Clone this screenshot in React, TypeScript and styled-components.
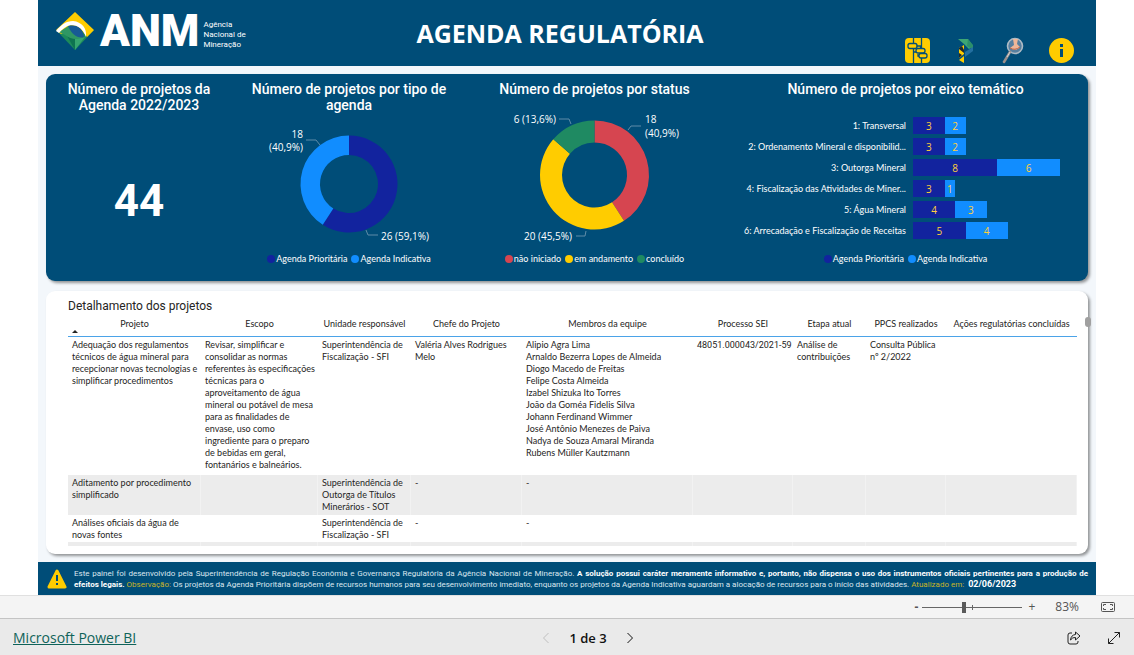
import React from "react";
import styled, { createGlobalStyle } from "styled-components";

const color = {
  navy: "#004d78",
  page: "#f3f7fb",
  yellow: "#ffcc00",
  priority: "#12239e",
  indicative: "#118dff",
  red: "#d64550",
  green: "#1f8a62",
};

const textFont = `"Open Sans", "Segoe UI", sans-serif`;
const titleFont = `Roboto, "Liberation Sans", sans-serif`;
const denseFont = `Lato, "Segoe UI", sans-serif`;

const GlobalStyle = createGlobalStyle`
  * { box-sizing: border-box; }
  body { margin: 0; background: #fff; font-family: ${textFont}; color: #252423; }
  button { border: 0; padding: 0; background: none; color: inherit; font: inherit; display: flex; cursor: pointer; }
  h1, h2, p, ul { margin: 0; padding: 0; }
`;

const Shell = styled.div`
  display: flex;
  flex-direction: column;
  min-height: 100vh;
`;

const Report = styled.main`
  flex: 1;
  display: flex;
  flex-direction: column;
  margin: 0 38px;
  background: ${color.page};
`;

const Header = styled.header`
  display: grid;
  grid-template-columns: 1fr auto 1fr;
  align-items: center;
  height: 66px;
  padding: 0 22px 0 8px;
  background: ${color.navy};
  color: #fff;
`;

const Brand = styled.div`
  display: flex;
  align-items: center;
  padding-left: 10px;
  padding-bottom: 4px;
`;

const BrandName = styled.span`
  margin-left: 5px;
  font: 900 44px/48px ${titleFont};
`;

const BrandCaption = styled.span`
  margin: 8px 0 0 4px;
  font: 400 8px/10px ${titleFont};
`;

const Title = styled.h1`
  font-size: 25px;
  line-height: 34px;
  font-weight: 700;
`;

const HeaderActions = styled.nav`
  align-self: end;
  justify-self: end;
  display: flex;
  align-items: center;
  gap: 23px;
  padding-bottom: 2px;
`;

const Summary = styled.section`
  display: grid;
  grid-template-columns: 186fr 234fr 257fr 365fr;
  height: 207px;
  margin: 8px 8px 0;
  border-radius: 9px;
  background: ${color.navy};
  box-shadow: 2px 2px 3px rgba(0, 0, 0, 0.4);
  color: #fff;
`;

const Tile = styled.article`
  display: flex;
  flex-direction: column;
  align-items: center;
  padding-top: 7px;
`;

const TileTitle = styled.h2<{ $inset?: number }>`
  padding: 0 ${(p) => p.$inset ?? 0}px;
  font: 500 14px/16px ${titleFont};
  text-align: center;
`;

const BigNumber = styled.p`
  margin-top: 60px;
  font: 700 44px/56px ${titleFont};
`;

const Chart = styled.svg`
  display: block;
  overflow: visible;
  flex: none;
  margin-top: 1px;
  font-size: 10px;
  fill: #fff;
`;

const Legend = styled.ul`
  display: flex;
  justify-content: center;
  gap: 4px;
  margin-top: auto;
  margin-bottom: 15px;
  list-style: none;
  font: 400 9px/14px ${denseFont};
  white-space: nowrap;
`;

const LegendItem = styled.li<{ $color: string }>`
  display: flex;
  align-items: center;
  gap: 1px;
  &::before {
    content: "";
    width: 8px;
    height: 8px;
    border-radius: 50%;
    background: ${(p) => p.$color};
  }
`;

const BarChart = styled.div`
  align-self: stretch;
  display: flex;
  flex-direction: column;
  gap: 4px;
  margin-top: 20px;
  padding-right: 28px;
`;

const BarRow = styled.div`
  display: grid;
  grid-template-columns: 183fr 147fr;
  column-gap: 7px;
  align-items: center;
  height: 17px;
`;

const BarLabel = styled.span`
  font: 400 9px/16px ${denseFont};
  text-align: right;
  white-space: nowrap;
`;

const Bars = styled.div`
  display: flex;
`;

const Bar = styled.span<{ $color: string }>`
  height: 17px;
  background: ${(p) => p.$color};
  color: #ffd03b;
  font-size: 10px;
  line-height: 18px;
  text-align: center;
`;

const Details = styled.section`
  position: relative;
  height: 263px;
  margin: 10px 8px 8px;
  padding: 8px 11px 0 22px;
  border-radius: 9px;
  background: #fff;
  box-shadow: 2px 2px 3px rgba(0, 0, 0, 0.4);
`;

const DetailsTitle = styled.h2`
  font: 400 12px/14px ${titleFont};
`;

const TableViewport = styled.div`
  height: 231px;
  margin-top: 2px;
  overflow: hidden;
`;

const ScrollThumb = styled.span`
  position: absolute;
  top: 26px;
  right: -3px;
  width: 6px;
  height: 10px;
  border-radius: 3px;
  background: #a0a0a0;
`;

const Table = styled.table`
  width: 100%;
  table-layout: fixed;
  border-collapse: separate;
  border-spacing: 0;
  font: 400 9px/12px ${denseFont};
`;

const HeadCell = styled.th`
  height: 22px;
  padding: 3px 0 0;
  border-bottom: 1px solid #4ba3e8;
  font-weight: 400;
  vertical-align: top;
  white-space: nowrap;
`;

const SortMark = styled.svg`
  display: block;
  margin: 0 0 0 4px;
`;

const Row = styled.tr<{ $height: number }>`
  height: ${(p) => p.$height}px;
  &:nth-child(even) { background: #ececec; }
`;

const Cell = styled.td<{ $numeric: boolean }>`
  padding: 2px 0 0 4px;
  border-right: 1px solid rgba(255, 255, 255, 0.3);
  font-family: ${(p) => (p.$numeric ? titleFont : denseFont)};
  vertical-align: top;
  white-space: pre;
`;

const Notice = styled.footer`
  display: flex;
  align-items: center;
  gap: 7px;
  height: 33px;
  padding: 0 8px 0 9px;
  background: ${color.navy};
  color: #dbe7ef;
`;

const NoticeText = styled.div`
  flex: 1;
  font: 400 8px/11px ${titleFont};
  b { color: #fff; }
  em { font-style: normal; color: #c8b428; }
  time { margin-left: 2px; font: 700 9px/11px ${titleFont}; color: #fff; }
`;

const NoticeLine = styled.p<{ $justify?: boolean }>`
  text-align-last: ${(p) => (p.$justify ? "justify" : "left")};
`;

const ZoomBar = styled.div`
  display: flex;
  align-items: center;
  justify-content: flex-end;
  height: 23px;
  padding-right: 19px;
  border-top: 1px solid #e0e0e0;
  background: #f4f4f4;
  color: #555;
  font-size: 12px;
  line-height: 16px;
`;

const ZoomSlider = styled.input`
  appearance: none;
  width: 100px;
  height: 12px;
  margin: 0 6px 0 4px;
  background:
    linear-gradient(#666, #666) center / 1px 5px no-repeat,
    linear-gradient(#666, #666) center / 100% 1px no-repeat;
  &::-webkit-slider-thumb {
    appearance: none;
    width: 4px;
    height: 11px;
    background: #5a5a5a;
  }
`;

const ZoomValue = styled.output`
  margin: 0 22px 0 20px;
`;

const Pager = styled.div`
  display: grid;
  grid-template-columns: 1fr auto 1fr;
  align-items: center;
  height: 37px;
  padding: 2px 13px 0;
  border-top: 1px solid #c4c4c4;
  background: #eaeaea;
`;

const BrandLink = styled.a`
  justify-self: start;
  font-size: 14px;
  line-height: 20px;
  color: #0f6359;
`;

const PageNav = styled.nav`
  display: flex;
  align-items: center;
  gap: 19px;
  padding-left: 42px;
  font-size: 13px;
  font-weight: 600;
  line-height: 20px;
  color: #111;
  button:disabled { color: #c0c0c0; }
`;

const PagerActions = styled.div`
  justify-self: end;
  display: flex;
  align-items: center;
  gap: 26px;
`;

type Slice = { value: number; color: string };

function Donut({ cx, cy, outer, inner, slices }: { cx: number; cy: number; outer: number; inner: number; slices: Slice[] }) {
  const total = slices.reduce((sum, s) => sum + s.value, 0);
  const point = (r: number, t: number) => {
    const a = t * 2 * Math.PI;
    return `${cx + r * Math.sin(a)} ${cy - r * Math.cos(a)}`;
  };
  let start = 0;
  return (
    <>
      {slices.map((s) => {
        const end = start + s.value / total;
        const large = end - start > 0.5 ? 1 : 0;
        const d = `M${point(outer, start)}A${outer} ${outer} 0 ${large} 1 ${point(outer, end)}L${point(inner, end)}A${inner} ${inner} 0 ${large} 0 ${point(inner, start)}Z`;
        start = end;
        return <path key={s.color} d={d} fill={s.color} />;
      })}
    </>
  );
}

const agendaLegend = [
  { label: "Agenda Prioritária", color: color.priority },
  { label: "Agenda Indicativa", color: color.indicative },
];

const statusLegend = [
  { label: "não iniciado", color: color.red },
  { label: "em andamento", color: color.yellow },
  { label: "concluído", color: color.green },
];

function ChartLegend({ items }: { items: { label: string; color: string }[] }) {
  return (
    <Legend>
      {items.map((i) => (
        <LegendItem key={i.label} $color={i.color}>{i.label}</LegendItem>
      ))}
    </Legend>
  );
}

const axes: [string, number, number][] = [
  ["1: Transversal", 3, 2],
  ["2: Ordenamento Mineral e disponibilid...", 3, 2],
  ["3: Outorga Mineral ", 8, 6],
  ["4: Fiscalização das Atividades de Miner...", 3, 1],
  ["5: Água Mineral", 4, 3],
  ["6: Arrecadação e Fiscalização de Receitas", 5, 4],
];
const axisMax = 14;

const processColumn = 5;

const columns: [string, number][] = [
  ["Projeto", 133],
  ["Escopo", 117],
  ["Unidade responsável", 93],
  ["Chefe do Projeto", 111],
  ["Membros da equipe", 171],
  ["Processo SEI", 100],
  ["Etapa atual", 73],
  ["PPCS realizados", 80],
  ["Ações regulatórias concluídas", 131],
];

const rows: { height: number; cells: string[] }[] = [
  {
    height: 138,
    cells: [
      "Adequação dos regulamentos\ntécnicos de água mineral para\nrecepcionar novas tecnologias e\nsimplificar procedimentos",
      "Revisar, simplificar e\nconsolidar as normas\nreferentes às especificações\ntécnicas para o\naproveitamento de água\nmineral ou potável de mesa\npara as finalidades de\nenvase, uso como\ningrediente para o preparo\nde bebidas em geral,\nfontanários e balneários.",
      "Superintendência de\nFiscalização - SFI",
      "Valéria Alves Rodrigues\nMelo",
      "Alipio Agra Lima\nArnaldo Bezerra Lopes de Almeida\nDiogo Macedo de Freitas\nFelipe Costa Almeida\nIzabel Shizuka Ito Torres\nJoão da Goméa Fidelis Silva\nJohann Ferdinand Wimmer\nJosé Antônio Menezes de Paiva\nNadya de Souza Amaral Miranda\nRubens Müller Kautzmann",
      "48051.000043/2021-59",
      "Análise de\ncontribuições",
      "Consulta Pública\nnº 2/2022",
      "",
    ],
  },
  {
    height: 40,
    cells: ["Aditamento por procedimento\nsimplificado", "", "Superintendência de\nOutorga de Títulos\nMinerários - SOT", "-", "-", "", "", "", ""],
  },
  {
    height: 27,
    cells: ["Análises oficiais da água de\nnovas fontes", "", "Superintendência de\nFiscalização - SFI", "-", "-", "", "", "", ""],
  },
  { height: 27, cells: ["", "", "", "", "", "", "", "", ""] },
];

function BrandMark() {
  return (
    <svg width="39" height="39" viewBox="0 0 39 39" aria-hidden="true">
      <path d="M0 18 19 38 38 18Z" fill="#1d8a5a" />
      <path d="M10 22 19 38 19 27Z" fill="#0e7350" />
      <path d="M19 38 29 25 19 27Z" fill="#36a56f" />
      <path d="M19 0 38 18 31 25 24 16 5 22 0 18Z" fill={color.yellow} />
      <path d="M3 20 14 13 28 25Q18 30 9 23Z" fill="#2f9764" />
      <path d="M12 14C20 11 27 16 28 25C22 27 16 23 12 14Z" fill="#175a94" />
      <path d="M0 19C5 13 10 9 17 9C26 10 31 16 30 25C27 17 22 13 15 13C10 14 6 17 3 21Z" fill="#fff" />
    </svg>
  );
}

function ProcessIcon() {
  return (
    <svg width="25" height="25" viewBox="0 0 25 25" aria-hidden="true">
      <rect width="25" height="25" rx="4" fill={color.yellow} />
      <g fill="none" stroke={color.navy} strokeWidth="1.3">
        <path d="M8.500 0V5M8.500 11V25M16.500 0V10M16.500 20V25M11.500 8H15.500V10M8.500 14H11M13 16V18H14" />
        <rect x="3" y="5.500" width="9" height="5" rx="2" />
        <rect x="11" y="10.500" width="9" height="4.500" rx="2" />
        <rect x="14" y="15.500" width="8" height="4.500" rx="2" />
      </g>
    </svg>
  );
}

function ParticipationIcon() {
  return (
    <svg width="25" height="25" viewBox="0 0 25 25" aria-hidden="true">
      <path d="M5 1H15L20 8 16 11 11 6Z" fill="#3da675" />
      <path d="M15 1 20 7V12L14 8Z" fill="#2c8f6b" />
      <path d="M20 9V13L12 19V14Z" fill="#236fa0" />
      <path d="M6 10 11 7V16L6 20Z" fill={color.yellow} />
      <path d="M6 10 9 8 11 12V15L6 11Z" fill="#1d2830" />
      <path d="M6 15 9 17 6 20Z" fill="#1d2830" />
      <path d="M6 22 11 18V25Z" fill={color.yellow} />
    </svg>
  );
}

function SearchIcon() {
  return (
    <svg width="25" height="27" viewBox="0 0 25 27" aria-hidden="true">
      <circle cx="14" cy="9" r="7.500" fill="#567f9f" stroke="#aebbc5" strokeWidth="1.600" />
      <path d="M12 2H17L16 7 19 10C17 13 13 14 9 11L13 8Z" fill="#efb698" />
      <path d="M9 11Q14 14 19 10" fill="none" stroke="#b96349" />
      <path d="M9 15 3 25" stroke="#9a8f8c" strokeWidth="2.500" strokeLinecap="round" />
      <path d="M9 15 6 20" stroke="#d8d8d8" strokeWidth="1" />
    </svg>
  );
}

function InfoIcon() {
  return (
    <svg width="25" height="25" viewBox="0 0 25 25" aria-hidden="true">
      <circle cx="12.500" cy="12.500" r="12.500" fill={color.yellow} />
      <path d="M11 6H14V9H11ZM11 11H14V19H11Z" fill={color.navy} />
    </svg>
  );
}

export default function App() {
  return (
    <Shell>
      <GlobalStyle />
      <Report>
        <Header>
          <Brand>
            <BrandMark />
            <BrandName>ANM</BrandName>
            <BrandCaption>Agência<br />Nacional de<br />Mineração</BrandCaption>
          </Brand>
          <Title>AGENDA REGULATÓRIA</Title>
          <HeaderActions>
            <button aria-label="Processo"><ProcessIcon /></button>
            <button aria-label="Participação"><ParticipationIcon /></button>
            <button aria-label="Consulta"><SearchIcon /></button>
            <button aria-label="Informações"><InfoIcon /></button>
          </HeaderActions>
        </Header>

        <Summary>
          <Tile>
            <TileTitle $inset={16}>Número de projetos da Agenda 2022/2023</TileTitle>
            <BigNumber>44</BigNumber>
          </Tile>
          <Tile>
            <TileTitle $inset={16}>Número de projetos por tipo de agenda</TileTitle>
            <Chart width="234" height="130" viewBox="0 0 234 130">
              <Donut cx={117} cy={70} outer={48.5} inner={29} slices={[{ value: 26, color: color.priority }, { value: 18, color: color.indicative }]} />
              <path d="M74 26H84L88 31M134 116 136 121H146" fill="none" stroke="#5f8ca8" />
              <text x="71" y="24" textAnchor="end">18</text>
              <text x="71" y="37" textAnchor="end">(40,9%)</text>
              <text x="149" y="126">26 (59,1%)</text>
            </Chart>
            <ChartLegend items={agendaLegend} />
          </Tile>
          <Tile>
            <TileTitle>Número de projetos por status</TileTitle>
            <Chart width="257" height="146" viewBox="0 0 257 146">
              <Donut
                cx={128.5}
                cy={77}
                outer={54.5}
                inner={32.5}
                slices={[{ value: 18, color: color.red }, { value: 20, color: color.yellow }, { value: 6, color: color.green }]}
              />
              <path d="M93 21H103L105 26M162 32 165 28H175M110 138H119L120 133" fill="none" stroke="#5f8ca8" />
              <text x="90" y="25" textAnchor="end">6 (13,6%)</text>
              <text x="179" y="25">18</text>
              <text x="179" y="39">(40,9%)</text>
              <text x="106" y="142" textAnchor="end">20 (45,5%)</text>
            </Chart>
            <ChartLegend items={statusLegend} />
          </Tile>
          <Tile>
            <TileTitle>Número de projetos por eixo temático</TileTitle>
            <BarChart>
              {axes.map(([label, priority, indicative]) => (
                <BarRow key={label}>
                  <BarLabel>{label}</BarLabel>
                  <Bars>
                    <Bar $color={color.priority} style={{ width: `${(priority / axisMax) * 100}%` }}>{priority}</Bar>
                    <Bar $color={color.indicative} style={{ width: `${(indicative / axisMax) * 100}%` }}>{indicative}</Bar>
                  </Bars>
                </BarRow>
              ))}
            </BarChart>
            <ChartLegend items={agendaLegend} />
          </Tile>
        </Summary>

        <Details>
          <DetailsTitle>Detalhamento dos projetos</DetailsTitle>
          <ScrollThumb />
          <TableViewport>
            <Table>
              <colgroup>
                {columns.map(([name, width]) => <col key={name} width={width} />)}
              </colgroup>
              <thead>
                <tr>
                  {columns.map(([name], i) => (
                    <HeadCell key={name} scope="col">
                      {name}
                      {i === 0 && (
                        <SortMark width="6" height="3" viewBox="0 0 6 3" aria-hidden="true"><path d="M0 3 3 0 6 3Z" fill="#252423" /></SortMark>
                      )}
                    </HeadCell>
                  ))}
                </tr>
              </thead>
              <tbody>
                {rows.map((row, r) => (
                  <Row key={r} $height={row.height}>
                    {row.cells.map((cell, c) => <Cell key={c} $numeric={c === processColumn}>{cell}</Cell>)}
                  </Row>
                ))}
              </tbody>
            </Table>
          </TableViewport>
        </Details>

        <Notice>
          <svg width="20" height="20" viewBox="0 0 20 20" aria-hidden="true">
            <path d="M10 2 18 18H2Z" fill={color.yellow} stroke={color.yellow} strokeWidth="3" strokeLinejoin="round" />
            <path d="M9 6H11V12H9ZM9 14H11V16H9Z" fill={color.navy} />
          </svg>
          <NoticeText>
            <NoticeLine $justify>
              Este painel foi desenvolvido pela Superintendência de Regulação Econômia e Governança Regulatória da Agência Nacional de Mineração.{" "}
              <b>A solução possui caráter meramente informativo e, portanto, não dispensa o uso dos instrumentos oficiais pertinentes para a produção de</b>
            </NoticeLine>
            <NoticeLine>
              <b>efeitos legais.</b> <em>Observação:</em> Os projetos da Agenda Prioritária dispõem de recursos humanos para seu desenvolvimento imediato, enquanto os projetos da Agenda Indicativa aguardam a alocação de recursos para o início das atividades. <em>Atualizado em:</em>{" "}
              <time dateTime="2023-06-02">02/06/2023</time>
            </NoticeLine>
          </NoticeText>
        </Notice>
      </Report>

      <ZoomBar>
        <button aria-label="Reduzir"><b>-</b></button>
        <ZoomSlider type="range" min="0" max="200" defaultValue="83" aria-label="Zoom" />
        <button aria-label="Ampliar">+</button>
        <ZoomValue>83%</ZoomValue>
        <button aria-label="Ajustar à página">
          <svg width="14" height="10" viewBox="0 0 14 10" fill="none" stroke="#555" aria-hidden="true">
            <rect x="0.500" y="0.500" width="13" height="9" rx="1" />
            <path d="M5 2.500H2.500V4M2.500 6V7.500H5M9 2.500H11.500V4M11.500 6V7.500H9" />
          </svg>
        </button>
      </ZoomBar>

      <Pager>
        <BrandLink href="#powerbi">Microsoft Power BI</BrandLink>
        <PageNav aria-label="Páginas">
          <button disabled aria-label="Página anterior">
            <svg width="8" height="12" viewBox="0 0 8 12" fill="none" stroke="currentColor" aria-hidden="true"><path d="M6.500 1 1.500 6 6.500 11" /></svg>
          </button>
          <span>1 de 3</span>
          <button aria-label="Próxima página">
            <svg width="8" height="12" viewBox="0 0 8 12" fill="none" stroke="currentColor" aria-hidden="true"><path d="M1.500 1 6.500 6 1.500 11" /></svg>
          </button>
        </PageNav>
        <PagerActions>
          <button aria-label="Compartilhar">
            <svg width="14" height="14" viewBox="0 0 14 14" fill="none" stroke="#222" strokeLinejoin="round" aria-hidden="true">
              <path d="M5 2H3Q1 2 1 4V11Q1 13 3 13H9Q11 13 11 11V10" />
              <path d="M8.500 1 13 5 8.500 9V6.500Q5.500 6 3.500 9Q4 4 8.500 3.500Z" />
            </svg>
          </button>
          <button aria-label="Tela cheia">
            <svg width="14" height="14" viewBox="0 0 14 14" fill="none" stroke="#222" aria-hidden="true">
              <path d="M1.500 12.500 12.500 1.500M7.500 1.500H12.500V6.500M1.500 7.500V12.500H6.500" />
            </svg>
          </button>
        </PagerActions>
      </Pager>
    </Shell>
  );
}
